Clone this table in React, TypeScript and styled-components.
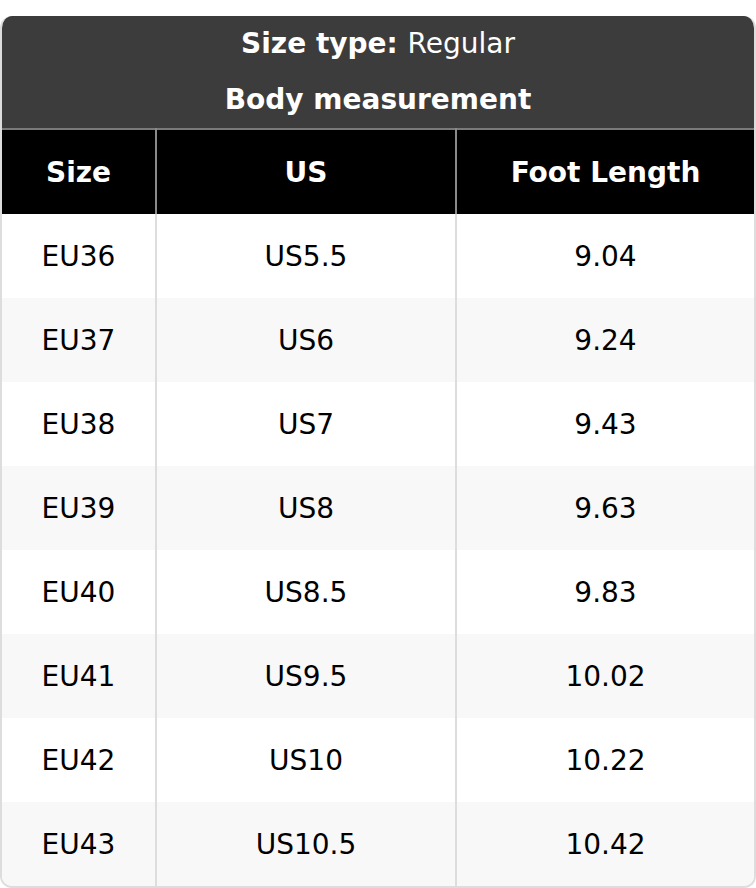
import React from 'react'
import styled, { createGlobalStyle } from 'styled-components'

const GlobalStyle = createGlobalStyle`
  html, body {
    margin: 0;
    padding: 0;
    background: #ffffff;
  }
  body {
    font-family: 'DejaVu Sans', Verdana, sans-serif;
  }
`

const Page = styled.div`
  padding-top: 16px;
  width: 756px;
`

const Card = styled.div`
  width: 756px;
  box-sizing: border-box;
  border: 2px solid #dddddd;
  border-top: none;
  border-radius: 12px;
  overflow: hidden;
`

const Table = styled.table`
  width: 100%;
  border-collapse: collapse;
  table-layout: fixed;
`

const Col = styled.col<{ $w?: number }>`
  width: ${({ $w }) => ($w ? `${$w}px` : 'auto')};
`

const Caption = styled.th`
  background: #3c3c3c;
  color: #ffffff;
  font-size: 28px;
  font-weight: bold;
  line-height: 30px;
  padding: 13px 0;
  text-align: center;
`

const CaptionValue = styled.span`
  font-weight: normal;
`

const HeadRow = styled.tr`
  border-top: 2px solid #7a7a7a;
`

const HeadCell = styled.th`
  background: #000000;
  color: #ffffff;
  font-size: 28px;
  font-weight: bold;
  height: 84px;
  padding: 0;
  text-align: center;
  border-left: 2px solid #8a8a8a;
  &:first-child {
    border-left: none;
  }
`

const Row = styled.tr<{ $shade: boolean }>`
  background: ${({ $shade }) => ($shade ? '#f8f8f8' : '#ffffff')};
`

const Cell = styled.td`
  color: #000000;
  font-size: 28px;
  height: 84px;
  padding: 0;
  text-align: center;
  border-left: 2px solid #dddddd;
  &:first-child {
    border-left: none;
  }
`

const sizes = [
  ['EU36', 'US5.5', '9.04'],
  ['EU37', 'US6', '9.24'],
  ['EU38', 'US7', '9.43'],
  ['EU39', 'US8', '9.63'],
  ['EU40', 'US8.5', '9.83'],
  ['EU41', 'US9.5', '10.02'],
  ['EU42', 'US10', '10.22'],
  ['EU43', 'US10.5', '10.42'],
]

export default function App() {
  return (
    <Page>
      <GlobalStyle />
      <Card>
        <Table>
          <colgroup>
            <Col $w={154} />
            <Col $w={300} />
            <Col />
          </colgroup>
          <thead>
            <tr>
              <Caption colSpan={3}>
                Size type: <CaptionValue>Regular</CaptionValue>
              </Caption>
            </tr>
            <tr>
              <Caption colSpan={3}>Body measurement</Caption>
            </tr>
            <HeadRow>
              <HeadCell>Size</HeadCell>
              <HeadCell>US</HeadCell>
              <HeadCell>Foot Length</HeadCell>
            </HeadRow>
          </thead>
          <tbody>
            {sizes.map((r, i) => (
              <Row key={r[0]} $shade={i % 2 === 1}>
                <Cell>{r[0]}</Cell>
                <Cell>{r[1]}</Cell>
                <Cell>{r[2]}</Cell>
              </Row>
            ))}
          </tbody>
        </Table>
      </Card>
    </Page>
  )
}
